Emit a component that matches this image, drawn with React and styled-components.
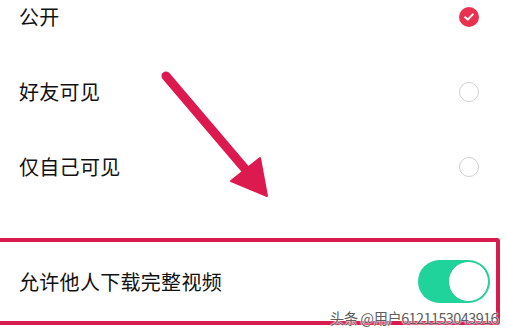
import React from 'react';
import styled, {createGlobalStyle} from 'styled-components';

const options = [
    {label: '公开', checked: true},
    {label: '好友可见', checked: false},
    {label: '仅自己可见', checked: false},
];

export default function App(){
    return(
        <Page>
            <GlobalStyle/>
            <List>
                {options.map(o => (
                    <Row key={o.label}>
                        <Label>{o.label}</Label>
                        <Radio checked={o.checked}>
                            {o.checked && (
                                <svg width="10" height="8" viewBox="0 0 10 8">
                                    <path d="M1.2 4.2 L3.8 6.6 L8.8 1.4" fill="none" stroke="#fff" strokeWidth="2" strokeLinecap="round" strokeLinejoin="round"/>
                                </svg>
                            )}
                        </Radio>
                    </Row>
                ))}
            </List>

            <Highlight>
                <Label>允许他人下载完整视频</Label>
                <Toggle><Knob/></Toggle>
            </Highlight>

            <Arrow width="507" height="332" viewBox="0 0 507 332">
                <line x1="166" y1="76" x2="246" y2="170" stroke="#dc1a4f" strokeWidth="9" strokeLinecap="round"/>
                <polygon points="231,181 260,158 267,196" fill="#dc1a4f" strokeLinejoin="round" stroke="#dc1a4f" strokeWidth="2"/>
            </Arrow>

            <Watermark>头条 @用户6121153043916</Watermark>
        </Page>
    )
}

const GlobalStyle = createGlobalStyle`
    html, body {
        margin:0;
        padding:0;
        background:#fff;
        overflow:hidden;
    }
    body {
        font-family:"Noto Sans CJK SC", "Noto Sans", sans-serif;
    }
`

const Page = styled.div`
    position:relative;
    width:507px;
    height:332px;
    overflow:hidden;
    background:#fff;
`

const List = styled.div`
    display:flex;
    flex-direction:column;
    margin-top:-21px;
`

const Row = styled.div`
    display:flex;
    align-items:center;
    justify-content:space-between;
    height:75px;
    padding:0 28px 0 19px;
`

const Label = styled.span`
    font-size:20px;
    line-height:24px;
    color:#111;
    letter-spacing:0.3px;
`

const Radio = styled.div`
    width:20px;
    height:20px;
    box-sizing:border-box;
    border-radius:50%;
    display:flex;
    align-items:center;
    justify-content:center;
    background:${p => p.checked ? '#e8324f' : '#fff'};
    border:${p => p.checked ? 'none' : '1.5px solid #cfcfcf'};
`

const Highlight = styled.div`
    display:flex;
    align-items:center;
    justify-content:space-between;
    box-sizing:border-box;
    margin:34px 0 0 -10px;
    width:510px;
    height:87px;
    padding:0 6px 0 25px;
    border:4px solid #d81b4f;
    border-radius:3px;
`

const Toggle = styled.div`
    display:flex;
    align-items:center;
    justify-content:flex-end;
    width:72px;
    height:43px;
    border-radius:22px;
    background:#1fd39a;
`

const Knob = styled.div`
    width:41px;
    height:41px;
    box-sizing:border-box;
    margin-right:1px;
    border-radius:50%;
    background:#fff;
    border:1.5px solid #1fc890;
`

const Arrow = styled.svg`
    position:absolute;
    left:0;
    top:0;
    pointer-events:none;
`

const Watermark = styled.div`
    position:absolute;
    right:9px;
    top:309px;
    font-size:14.5px;
    line-height:18px;
    color:#5e5e5e;
    letter-spacing:-0.6px;
    text-shadow:0 0 1px #fff, 0 0 2px #fff, 0 0 2px #fff;
`
